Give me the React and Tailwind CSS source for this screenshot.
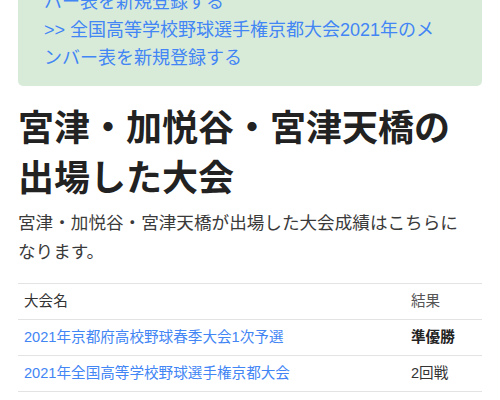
import React from "react";

const rows = [
  { name: "2021年京都府高校野球春季大会1次予選", result: "準優勝", bold: true },
  { name: "2021年全国高等学校野球選手権京都大会", result: "2回戦", bold: false },
];

export default function App() {
  return (
    <div
      className="w-[500px] h-[400px] overflow-hidden bg-white px-[18px] text-[#212529]"
      style={{ fontFamily: '"Liberation Sans", "Noto Sans CJK JP", sans-serif' }}
    >
      {/* member registration notice, scrolled partly off the top */}
      <div className="-mt-[54px] rounded-[5px] bg-[#d8ebd9] pl-[26px] pr-[30px] pt-[14px] pb-[14px] text-[18px] leading-[28px] text-[#4285f4]">
        <a href="#" className="block">
          <span className="block whitespace-nowrap">{">> 京都府高校野球秋季大会2021年のメン"}</span>
          <span className="block whitespace-nowrap">バー表を新規登録する</span>
        </a>
        <a href="#" className="block">
          <span className="block whitespace-nowrap">{">> 全国高等学校野球選手権京都大会2021年のメ"}</span>
          <span className="block whitespace-nowrap">ンバー表を新規登録する</span>
        </a>
      </div>

      <h1 className="mt-[18px] text-[36px] font-bold leading-[50px] text-[#222]">
        宮津・加悦谷・宮津天橋の出場した大会
      </h1>

      <p className="mt-[5px] pr-[16px] text-[17.6px] leading-[29px] text-[#3a3a3a]">
        宮津・加悦谷・宮津天橋が出場した大会成績はこちらになります。
      </p>

      <table className="mt-[16px] w-full border-collapse text-[14.6px] leading-[21px]">
        <thead>
          <tr className="border-t border-b border-[#e3e3e3]">
            <th className="px-[6px] py-[7px] text-left font-normal text-[#333]">大会名</th>
            <th className="w-[77px] px-[6px] py-[7px] text-left font-normal text-[#555]">結果</th>
          </tr>
        </thead>
        <tbody>
          {rows.map((r) => (
            <tr key={r.name} className="border-b border-[#e3e3e3]">
              <td className="px-[6px] py-[7px]">
                <a href="#" className="text-[#4285f4]">{r.name}</a>
              </td>
              <td className={r.bold ? "px-[6px] py-[7px] font-bold text-[#222]" : "px-[6px] py-[7px] text-[#333]"}>
                {r.result}
              </td>
            </tr>
          ))}
        </tbody>
      </table>
    </div>
  );
}
